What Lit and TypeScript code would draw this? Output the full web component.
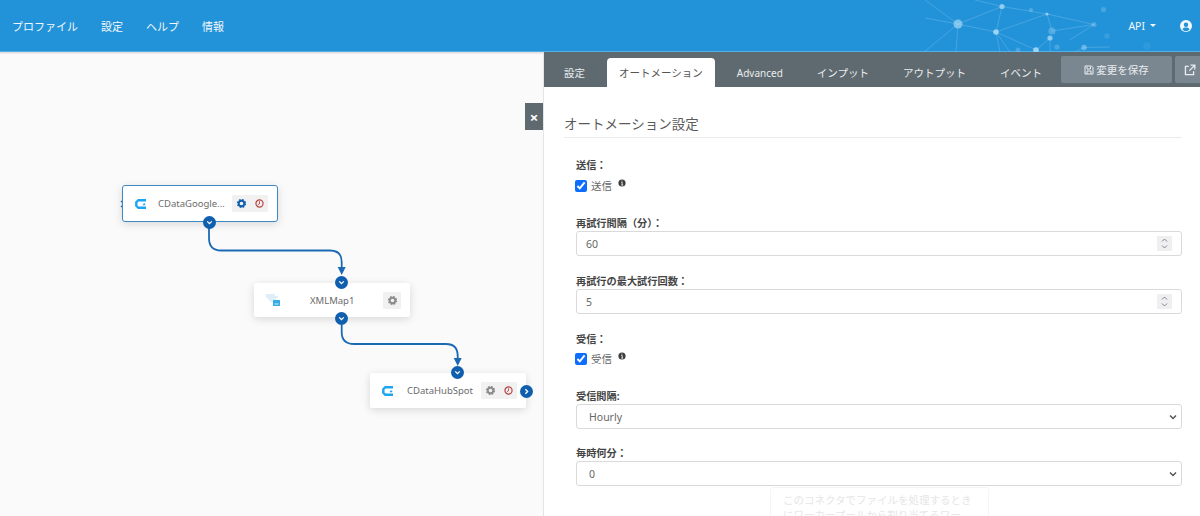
import { LitElement, html, css, svg } from "lit";
import { customElement } from "lit/decorators.js";

const gear = (color: string) => html`<svg class="ico" viewBox="0 0 12 12">
  <circle cx="6" cy="6" r="3" fill="none" stroke=${color} stroke-width="2"></circle>
  <circle cx="6" cy="6" r="4.3" fill="none" stroke=${color} stroke-width="1.5" stroke-dasharray="1.9 1.48"></circle>
</svg>`;

const clock = html`<svg class="ico" viewBox="0 0 12 12">
  <circle cx="6" cy="6" r="3.9" fill="none" stroke="#b8433f" stroke-width="1.3"></circle>
  <path d="M6 3.6V6.3L4.2 7.3" fill="none" stroke="#b8433f" stroke-width="1"></path>
</svg>`;

const chevron = html`<svg class="chev" viewBox="0 0 8 8"><path d="M2 3l2 2 2-2" fill="none" stroke="#fff" stroke-width="1.2"></path></svg>`;
const chevronRight = html`<svg class="chev" viewBox="0 0 8 8"><path d="M3 2l2 2-2 2" fill="none" stroke="#fff" stroke-width="1.2"></path></svg>`;

const cdataLogo = html`<svg class="logo" viewBox="0 0 12 10">
  <path d="M11 1.2H3.4L1.3 3.2V6.8L3.4 8.8H11" fill="none" stroke="#1ba6f2" stroke-width="2.4"></path>
  <path d="M8.6 4.4h1.6v1.8h-2.6z" fill="#1ba6f2"></path>
</svg>`;

const xmlLogo = html`<svg class="logo xml" viewBox="0 0 14 12">
  <path d="M0 1h9M0 3h12M2 5h8M4 7h3" stroke="#bfdff0" stroke-width="1.2"></path>
  <rect x="7" y="6" width="7" height="6" rx=".5" fill="#35ace6"></rect>
  <path d="M8.5 10h4" stroke="#fff" stroke-width=".8"></path>
</svg>`;

const info = html`<svg class="info" viewBox="0 0 8 8">
  <circle cx="4" cy="4" r="3.6" fill="#3d3d3d"></circle>
  <path d="M4 1.6v.9M3.2 3.4H4.2V6M3.2 6.1h2" fill="none" stroke="#fff" stroke-width=".8"></path>
</svg>`;

const stepper = html`<svg class="stepper" viewBox="0 0 15 15">
  <rect width="15" height="15" fill="#efeff1"></rect>
  <path d="M5 5.5l2.5-2.5 2.5 2.5M5 9.5l2.5 2.5 2.5-2.5" fill="none" stroke="#77777f" stroke-width=".9"></path>
</svg>`;

const netPoints: [number, number, number, number][] = [
  [958, 24, 4.5, 0.6], [1002, 6.5, 2.6, 0.7], [996, 32, 2.8, 0.8], [1047, 14, 1.6, 0.7],
  [1031, 10, 2, 0.3], [1094, 24.5, 2.5, 0.3], [1052, 31, 3.6, 0.3], [1050, 38, 2.6, 0.7],
  [1036, 50, 2.8, 0.8], [1084, 47.5, 2.7, 0.45], [1057, 47, 2.6, 0.25], [1018, 50, 2.4, 0.25],
  [1103.5, 9.5, 2.6, 0.25], [1107, 36, 2.7, 0.15], [1147, 46, 3.8, 0.08],
];
const netLines: [number, number, number, number][] = [
  [958, 24, 1002, 6.5], [958, 24, 996, 32], [1002, 6.5, 996, 32], [1002, 6.5, 1047, 14],
  [996, 32, 1047, 14], [996, 32, 1036, 50], [996, 32, 1010, 52], [996, 32, 1000, 52],
  [1047, 14, 1094, 24.5], [1047, 14, 1052, 31], [1052, 31, 1094, 24.5], [1094, 24.5, 1070, 40],
  [1050, 38, 1036, 50], [1050, 38, 1050, 52], [1084, 47.5, 1110, 47], [1084, 47.5, 1075, 52],
  [958, 24, 924, 52], [958, 24, 956, 52], [958, 24, 925, 18], [958, 24, 925, 0], [975, 0, 1002, 6.5],
];

type Node = { x: number; y: number; w: number; h: number; name: string; logo: unknown; first?: boolean; pad: number; tools: unknown[]; toolsW: number };

const nodes: Node[] = [
  { x: 122, y: 185, w: 156, h: 37, name: "CDataGoogle...", logo: cdataLogo, first: true, pad: 11, tools: [gear("#0f5fae"), clock], toolsW: 36 },
  { x: 254, y: 283, w: 156, h: 34, name: "XMLMap1", logo: xmlLogo, pad: 30, tools: [gear("#8b8b8b")], toolsW: 18 },
  { x: 370, y: 373, w: 156, h: 35, name: "CDataHubSpot", logo: cdataLogo, pad: 13, tools: [gear("#8b8b8b"), clock], toolsW: 36 },
];

const dots: { x: number; y: number; right?: boolean }[] = [
  { x: 209, y: 222 }, { x: 341.7, y: 282 }, { x: 341.7, y: 318 }, { x: 457.7, y: 372 }, { x: 526.5, y: 391, right: true },
];

@customElement("app-root")
export class AppRoot extends LitElement {
  static styles = css`
    :host {
      display: block;
      width: 1200px;
      height: 516px;
      overflow: hidden;
      position: relative;
      background: #fff;
      font-family: "Noto Sans", "Noto Sans CJK JP", sans-serif;
      font-size: 10.5px;
      color: #666;
    }
    .top {
      height: 52px;
      box-sizing: border-box;
      background: #2393d9;
      border-bottom: 1px solid #55aee4;
      display: flex;
      align-items: center;
      padding: 0 8px 0 12px;
      color: #f2f8fc;
      position: relative;
    }
    .net { position: absolute; left: 0; top: 0; width: 1200px; height: 52px; }
    .nav { display: flex; gap: 23px; position: relative; font-size: 11px; }
    .top-right { margin-left: auto; display: flex; align-items: center; gap: 24px; position: relative; }
    .api { display: flex; align-items: center; gap: 5px; }
    .caret { width: 0; height: 0; border: 3.5px solid transparent; border-top-color: #f2f8fc; border-bottom: 0; }
    .user { width: 12px; height: 12px; display: block; }
    .main { display: flex; height: 464px; }
    .canvas { width: 543px; background: #fafafa; position: relative; box-shadow: inset 0 3px 3px -3px #aaa; flex: none; }
    .wires { position: absolute; left: 0; top: -52px; width: 543px; height: 516px; pointer-events: none; }
    .node {
      position: absolute;
      box-sizing: border-box;
      background: #fff;
      border-radius: 2px;
      box-shadow: 0 2px 8px rgba(0, 0, 0, 0.14);
      display: flex;
      align-items: center;
      padding: 0 9px 0 12px;
    }
    .node.sel { border: 1.4px solid #3d88c5; border-radius: 3px; }
    .logo { width: 12px; height: 10px; flex: none; display: block; }
    .logo.xml { width: 14px; height: 12px; }
    .name { flex: 1; font-size: 9.5px; color: #6b6b6b; white-space: nowrap; }
    .tools { height: 17px; background: #f1f1f1; border-radius: 1px; display: flex; align-items: center; justify-content: space-around; flex: none; }
    .ico { width: 11px; height: 11px; display: block; }
    .dot {
      position: absolute;
      width: 13px;
      height: 13px;
      margin: -6.5px 0 0 -6.5px;
      border-radius: 50%;
      background: #0f5fae;
      display: flex;
      align-items: center;
      justify-content: center;
    }
    .chev { width: 9px; height: 9px; display: block; }
    .port { position: absolute; left: 120px; top: 148px; width: 5px; height: 8px; }
    .close {
      position: absolute;
      left: 525px;
      top: 51px;
      width: 18px;
      height: 27px;
      background: #5f6a70;
      color: #fff;
      font-size: 15px;
      font-weight: 700;
      display: flex;
      align-items: center;
      justify-content: center;
    }
    .panel { flex: 1; border-left: 1px solid #e4e4e4; min-width: 0; }
    .tabs {
      height: 35px;
      box-sizing: border-box;
      background: #5f6a70;
      display: flex;
      align-items: flex-end;
      gap: 10px;
      padding-left: 8px;
      position: relative;
      color: #e9ecee;
    }
    .tab { height: 29px; padding: 0 12px; display: flex; align-items: center; white-space: nowrap; }
    .tab.on { background: #fff; color: #555; border-radius: 4px 4px 0 0; }
    .tab.latin { font-size: 10px; }
    .save {
      position: absolute;
      left: 517px;
      top: 4px;
      width: 111px;
      height: 27px;
      background: #7a8791;
      border-radius: 2px;
      display: flex;
      align-items: center;
      justify-content: center;
      gap: 2px;
    }
    .ext {
      position: absolute;
      left: 631px;
      top: 4px;
      width: 40px;
      height: 27px;
      background: #7a8791;
      border-radius: 2px;
      display: flex;
      align-items: center;
      padding-left: 9px;
      box-sizing: border-box;
    }
    .save svg { width: 10px; height: 10px; display: block; }
    .ext svg { width: 12px; height: 12px; display: block; }
    .body { padding: 27px 18px 0 20px; }
    .title { font-size: 13.5px; line-height: 20px; color: #5a5a5a; padding-bottom: 3px; border-bottom: 1px solid #ebebeb; margin-bottom: 19px; }
    .form { padding-left: 12px; }
    .group { margin-bottom: 17px; }
    .group.chk { margin-bottom: 21px; }
    .group.last { margin-bottom: 16px; }
    .lbl { font-size: 10.2px; line-height: 16px; font-weight: 700; color: #444; display: block; }
    .check { display: flex; align-items: center; height: 16px; margin-top: 5px; gap: 4px; color: #666; }
    .check.tight { margin-top: 4px; }
    .check span { padding-bottom: 1px; }
    .check input { width: 12px; height: 12px; margin: 0 0 0 -1px; accent-color: #0d6efd; }
    .info { width: 8px; height: 8px; align-self: flex-start; margin-left: 2px; margin-top: 1px; }
    .box {
      height: 25px;
      box-sizing: border-box;
      border: 1px solid #dadada;
      border-radius: 3px;
      display: flex;
      align-items: center;
      padding: 0 9px 0 9px;
      background: #fff;
    }
    .box input {
      flex: 1;
      border: 0;
      outline: 0;
      padding: 0;
      min-width: 0;
      font: inherit;
      color: #666;
      background: transparent;
    }
    .stepper { width: 15px; height: 15px; display: block; flex: none; }
    select.box {
      width: 100%;
      appearance: none;
      font: inherit;
      color: #666;
      padding: 0 0 0 12px;
      outline: 0;
      background: #fff url("data:image/svg+xml,%3Csvg xmlns='http://www.w3.org/2000/svg' width='8' height='6'%3E%3Cpath d='M1 1.5l3 3 3-3' fill='none' stroke='%23555' stroke-width='1.5'/%3E%3C/svg%3E") no-repeat right 4px center;
    }
    .tip {
      position: absolute;
      left: 770px;
      top: 487px;
      width: 219px;
      height: 40px;
      box-sizing: border-box;
      background: #fff;
      border: 1px solid #f5f5f5;
      border-radius: 3px;
      padding: 5px 12px;
      line-height: 15px;
      color: #e6e6e6;
    }
  `;

  render() {
    return html`
      <div class="top">
        <svg class="net" viewBox="0 0 1200 52">
          ${netLines.map(([a, b, c, d]) => svg`<line x1=${a} y1=${b} x2=${c} y2=${d} stroke="#a5d6f5" stroke-opacity=".3" stroke-width=".9"></line>`)}
          ${netPoints.map(([x, y, r, o]) => svg`<circle cx=${x} cy=${y} r=${r} fill="#b5e0fa" fill-opacity=${o}></circle>`)}
        </svg>
        <div class="nav"><span>プロファイル</span><span>設定</span><span>ヘルプ</span><span>情報</span></div>
        <div class="top-right">
          <div class="api"><span>API</span><span class="caret"></span></div>
          <svg class="user" viewBox="0 0 12 12">
            <circle cx="6" cy="6" r="6" fill="#f4f9fd"></circle>
            <circle cx="6" cy="4.7" r="2.2" fill="#2393d9"></circle>
            <path d="M2.4 9.6C3 7.9 4.4 7.6 6 7.6s3 .3 3.6 2A4.9 4.9 0 0 1 2.4 9.6z" fill="#2393d9"></path>
          </svg>
        </div>
      </div>
      <div class="main">
        <div class="canvas">
          <svg class="wires" viewBox="0 0 543 516">
            <g fill="none" stroke="#1c69b3" stroke-width="1.8">
              <path d="M209 228V238Q209 250.5 221 250.5H330Q341.7 250.5 341.7 262V270"></path>
              <path d="M341.7 325V332Q341.7 344 354 344H446Q457.7 344 457.7 356V361"></path>
            </g>
            <path d="M337.7 267H345.7L341.7 275zM453.7 358H461.7L457.7 366z" fill="#1c69b3"></path>
          </svg>
          <svg class="port" viewBox="0 0 5 8"><path d="M1 1l3 3-3 3" fill="none" stroke="#2a72b5" stroke-width="1.2"></path></svg>
          ${nodes.map(
            (n) => html`<div
              class="node ${n.first ? "sel" : ""}"
              style="left:${n.x}px;top:${n.y - 52}px;width:${n.w}px;height:${n.h}px"
            >
              ${n.logo}
              <span class="name" style="padding-left:${n.pad}px">${n.name}</span>
              <div class="tools" style="width:${n.toolsW}px">${n.tools}</div>
            </div>`
          )}
          ${dots.map(
            (d) => html`<div class="dot" style="left:${d.x}px;top:${d.y - 52}px">${d.right ? chevronRight : chevron}</div>`
          )}
          <div class="close">×</div>
        </div>
        <div class="panel">
          <div class="tabs">
            <div class="tab">設定</div>
            <div class="tab on">オートメーション</div>
            <div class="tab latin">Advanced</div>
            <div class="tab">インプット</div>
            <div class="tab">アウトプット</div>
            <div class="tab">イベント</div>
            <div class="save">
              <svg viewBox="0 0 10 10"><path d="M1 1h6.5L9 2.5V9H1z M3 1.5V4h3.5V1.5 M3 9V6h4v3" fill="none" stroke="#e9ecee" stroke-width="1"></path></svg>
              <span>変更を保存</span>
            </div>
            <div class="ext">
              <svg viewBox="0 0 10 10"><path d="M4 2H1.2V8.8H8V6M5.5 1H9V4.5M9 1L4.5 5.5" fill="none" stroke="#e9ecee" stroke-width="1.1"></path></svg>
            </div>
          </div>
          <div class="body">
            <div class="title">オートメーション設定</div>
            <div class="form">
              <div class="group chk">
                <span class="lbl">送信：</span>
                <label class="check"><input type="checkbox" checked /><span>送信</span>${info}</label>
              </div>
              <div class="group">
                <span class="lbl">再試行間隔（分）：</span>
                <div class="box"><input value="60" />${stepper}</div>
              </div>
              <div class="group">
                <span class="lbl">再試行の最大試行回数：</span>
                <div class="box"><input value="5" />${stepper}</div>
              </div>
              <div class="group chk">
                <span class="lbl">受信：</span>
                <label class="check tight"><input type="checkbox" checked /><span>受信</span>${info}</label>
              </div>
              <div class="group last">
                <span class="lbl">受信間隔:</span>
                <select class="box"><option>Hourly</option></select>
              </div>
              <div class="group">
                <span class="lbl">毎時何分：</span>
                <select class="box"><option>0</option></select>
              </div>
            </div>
          </div>
        </div>
      </div>
      <div class="tip">このコネクタでファイルを処理するときにワーカープールから割り当てるワー</div>
    `;
  }
}
